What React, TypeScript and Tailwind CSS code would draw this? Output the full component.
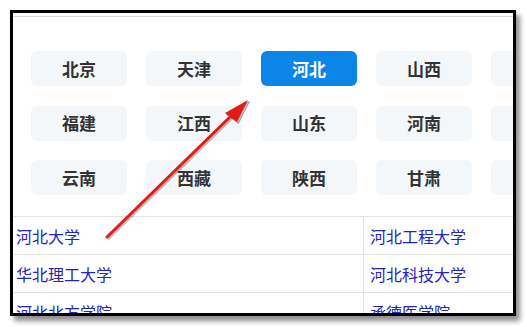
const provinces = [
  ["北京", "天津", "河北", "山西", ""],
  ["福建", "江西", "山东", "河南", ""],
  ["云南", "西藏", "陕西", "甘肃", ""],
];

const schools = [
  ["河北大学", "河北工程大学"],
  ["华北理工大学", "河北科技大学"],
  ["河北北方学院", "承德医学院"],
];

export default function App() {
  return (
    <div className="relative h-[327px] w-[527px] overflow-hidden bg-white font-['Noto_Sans_CJK_SC',sans-serif]">
      <div className="ml-[10px] mt-[10px] h-[306px] w-[506px] overflow-hidden border-[3px] border-black bg-white shadow-[4px_5px_5px_rgba(0,0,0,0.45)]">
        <div className="mt-[3px] border-t border-[#d9d9d9] pt-[34px]">
          <div className="flex flex-col gap-y-[19.5px] pl-[18px]">
            {provinces.map((row, i) => (
              <div key={i} className="flex gap-x-[19px]">
                {row.map((name, j) => (
                  <div
                    key={j}
                    className={`flex h-[35px] w-[96px] shrink-0 items-center justify-center rounded-[6px] text-[17px] font-bold ${
                      name === "河北" ? "bg-[#0b86e8] text-white" : "bg-[#f3f7fa] text-[#333]"
                    }`}
                  >
                    {name}
                  </div>
                ))}
              </div>
            ))}
          </div>
          <div className="mt-[21px] border-t border-[#e3e3e3]">
            {schools.map(([a, b]) => (
              <div key={a} className="flex h-[38px] border-b border-[#e3e3e3] text-[16px] text-[#2323bd]">
                <div className="flex w-[351px] items-center border-r border-[#e3e3e3] pl-[3px]">{a}</div>
                <div className="flex items-center pl-[6px]">{b}</div>
              </div>
            ))}
          </div>
        </div>
      </div>
      <svg className="pointer-events-none absolute left-0 top-0" width="527" height="327" viewBox="0 0 527 327">
        <g transform="translate(1.5 1.5)" fill="rgba(0,0,0,0.25)" stroke="rgba(0,0,0,0.25)">
          <line x1="107" y1="237" x2="232" y2="115" strokeWidth="3" strokeLinecap="round" />
          <polygon points="248,100 225,113 237,122" />
        </g>
        <line x1="107" y1="237" x2="232" y2="115" stroke="#e31b1b" strokeWidth="3" strokeLinecap="round" />
        <polygon points="248,100 225,113 237,122" fill="#e31b1b" />
      </svg>
    </div>
  );
}
